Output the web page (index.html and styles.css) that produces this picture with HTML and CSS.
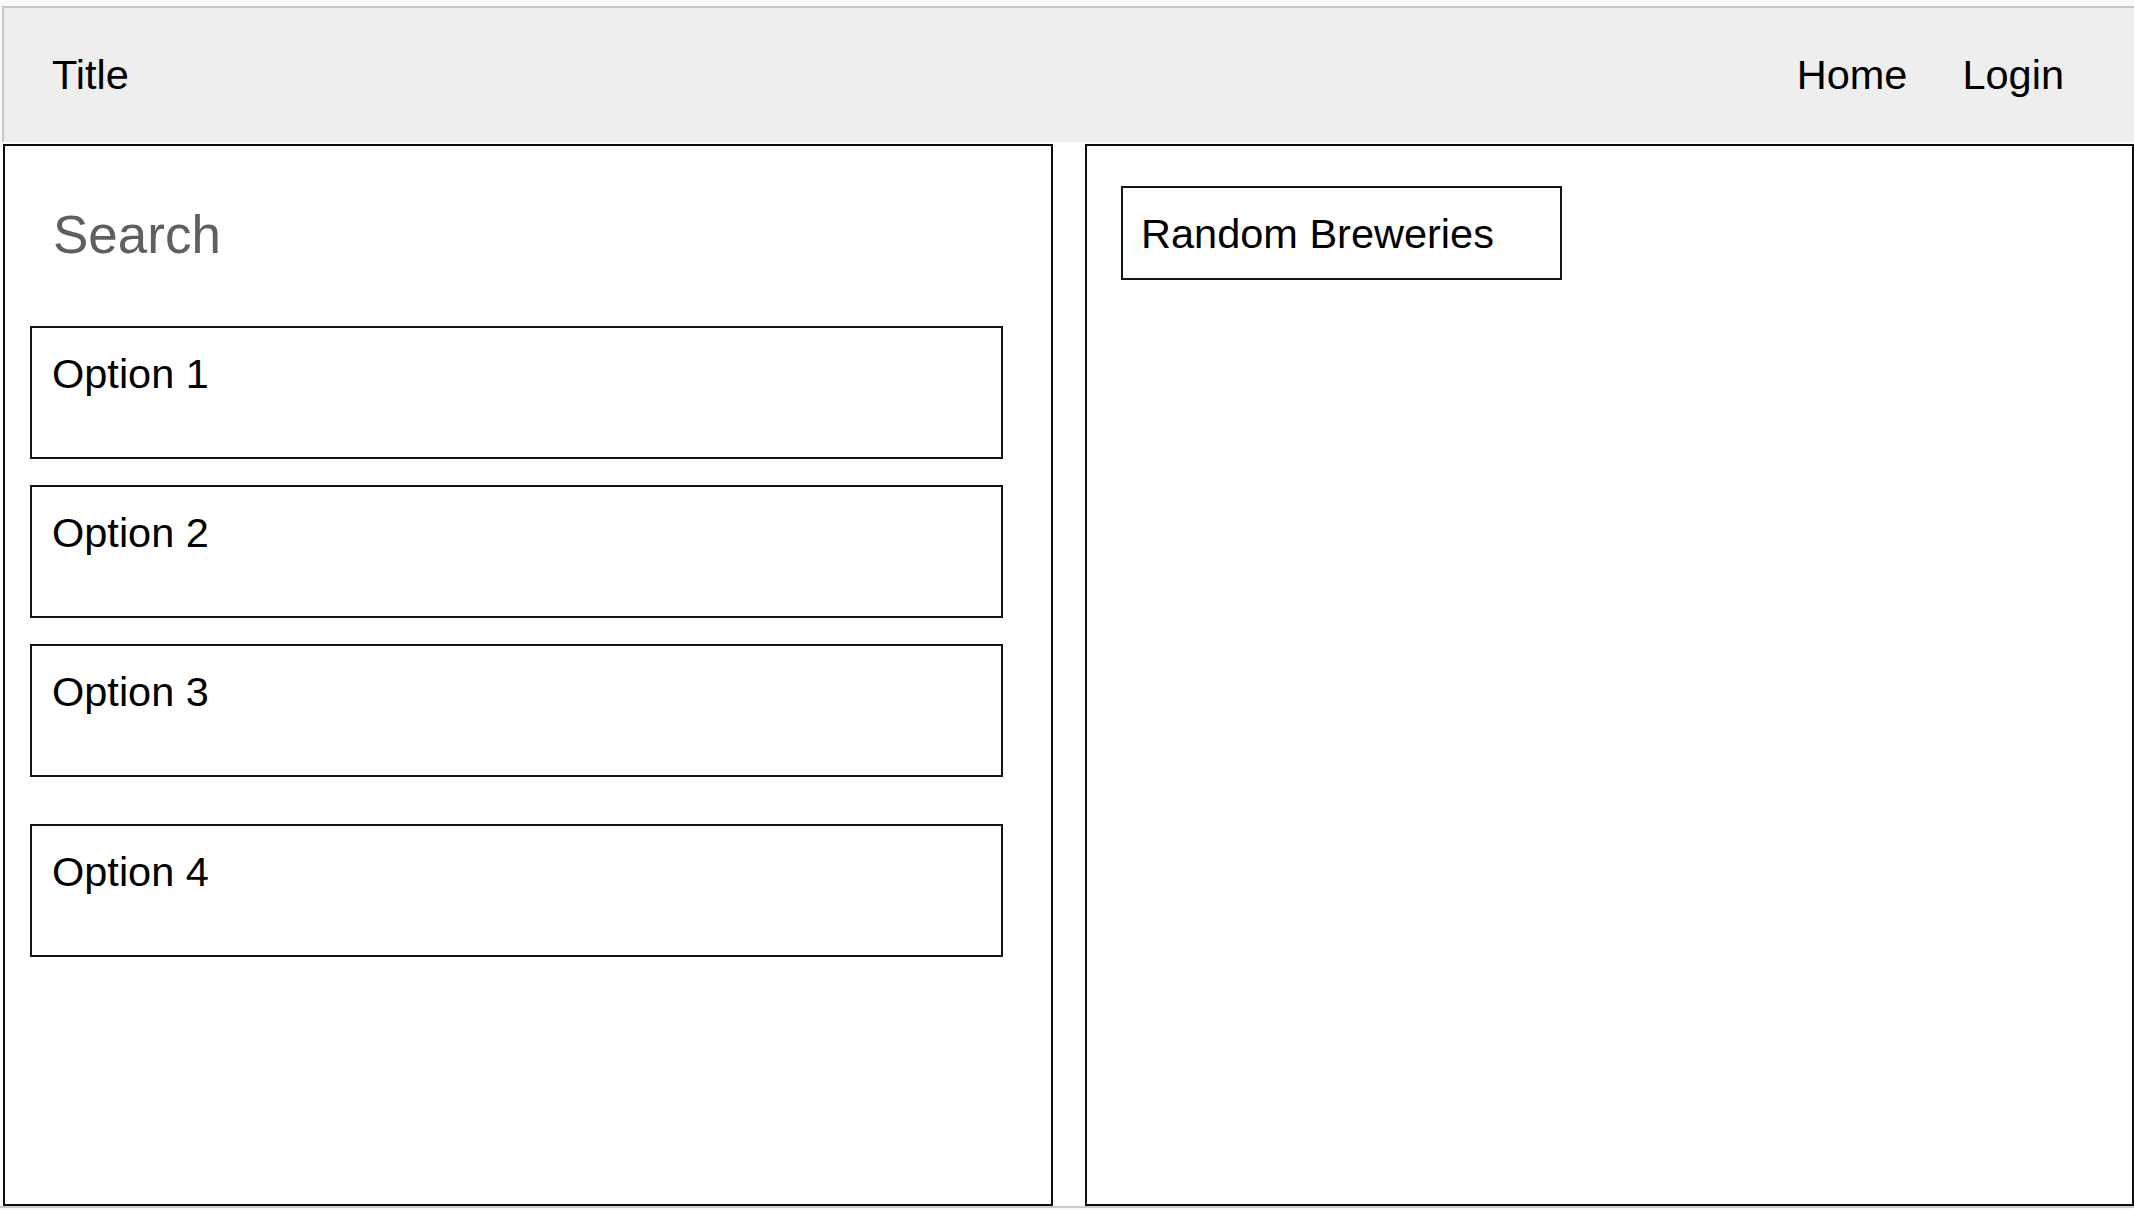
FILE: index.html
```html
<!DOCTYPE html>
<html lang="en">
<head>
<meta charset="utf-8">
<title>Breweries</title>
<link rel="stylesheet" href="styles.css">
</head>
<body>
<div class="page">
  <header class="topbar">
    <div class="title">Title</div>
    <nav class="nav">
      <a class="nav-link" href="#">Home</a>
      <a class="nav-link" href="#">Login</a>
    </nav>
  </header>
  <main class="content">
    <section class="panel search-panel">
      <h2 class="search-title">Search</h2>
      <div class="options">
        <div class="option">Option 1</div>
        <div class="option">Option 2</div>
        <div class="option">Option 3</div>
        <div class="option option-spaced">Option 4</div>
      </div>
    </section>
    <section class="panel results-panel">
      <div class="random-box">Random Breweries</div>
    </section>
  </main>
</div>
</body>
</html>
```

FILE: styles.css
```css
html, body {
  margin: 0;
  padding: 0;
}

body {
  background: #f8f9fa;
  font-family: "Liberation Sans", Arial, sans-serif;
  color: #000;
  width: 2134px;
  height: 1210px;
  overflow: hidden;
}

.page {
  padding-top: 6px;
}

.topbar {
  margin-left: 2px;
  height: 134px;
  background: #eeeeee;
  border-top: 2px solid #c6c6c6;
  border-left: 2px solid #c6c6c6;
  display: flex;
  align-items: center;
  justify-content: space-between;
  padding: 0 70px 0 48px;
  font-size: 41.5px;
  line-height: 48px;
}

.nav {
  display: flex;
  gap: 55px;
}

.nav-link {
  color: #000;
  text-decoration: none;
}

.content {
  display: flex;
  gap: 32px;
  padding: 2px 0 0 3px;
  height: 1062px;
  background: #fff;
  border-bottom: 2px solid #cacaca;
}

.panel {
  box-sizing: border-box;
  border: 2px solid #0d0d0d;
  background: #fff;
  height: 1062px;
}

.search-panel {
  width: 1050px;
  flex: none;
  padding-top: 58px;
}

.results-panel {
  flex: 1;
  padding: 40px 0 0 34px;
}

.search-title {
  margin: 0 0 0 48px;
  font-size: 53px;
  line-height: 61px;
  font-weight: normal;
  color: #5f5f5f;
}

.options {
  display: flex;
  flex-direction: column;
  gap: 26px;
  margin: 61px 0 0 25px;
  width: 973px;
}

.option {
  box-sizing: border-box;
  height: 133px;
  border: 2px solid #141414;
  padding: 22px 20px 0 20px;
  font-size: 41.5px;
  line-height: 48px;
}

.option-spaced {
  margin-top: 21px;
}

.random-box {
  box-sizing: border-box;
  width: 441px;
  height: 94px;
  border: 2px solid #141414;
  padding: 22px 18px 0 18px;
  font-size: 41.5px;
  line-height: 48px;
}
```
